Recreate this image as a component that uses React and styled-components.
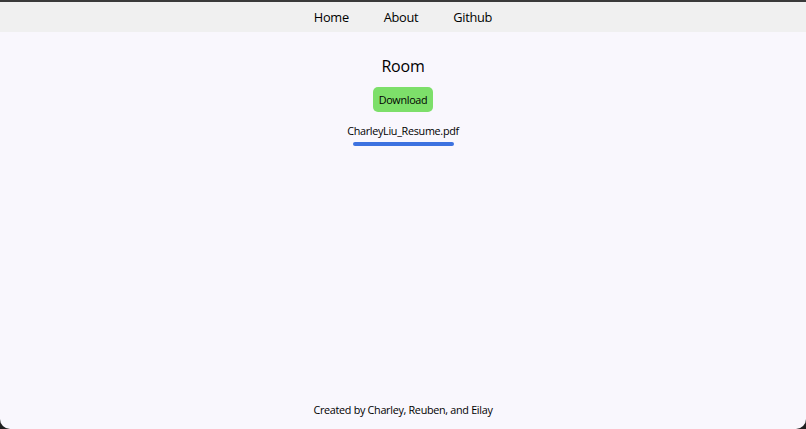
import React from "react";
import styled, { createGlobalStyle } from "styled-components";

const GlobalStyle = createGlobalStyle`
  html, body {
    margin: 0;
    padding: 0;
    background: #1f1f1f;
  }
  body {
    font-family: "Open Sans", "Noto Sans", sans-serif;
  }
`;

const Frame = styled.div`
  width: 806px;
  height: 429px;
  box-sizing: border-box;
  border-top: 2px solid #3a3a3a;
  background: #f9f7fd;
  border-radius: 0 0 10px 10px;
  overflow: hidden;
  display: flex;
  flex-direction: column;
`;

const Nav = styled.nav`
  height: 30px;
  background: #f0f0f0;
  display: flex;
  justify-content: center;
  align-items: center;
  gap: 35px;
`;

const NavLink = styled.a`
  font-size: 12.8px;
  letter-spacing: -0.3px;
  color: #000;
  text-decoration: none;
  cursor: pointer;
`;

const Main = styled.main`
  flex: 1;
  display: flex;
  flex-direction: column;
  align-items: center;
  padding-top: 22px;
`;

const Title = styled.h1`
  margin: 0;
  font-size: 16px;
  letter-spacing: -0.2px;
  font-weight: 500;
  color: #000;
  line-height: 24px;
`;

const DownloadButton = styled.button`
  margin-top: 9px;
  height: 25px;
  padding: 0 6px;
  border: none;
  border-radius: 5px;
  background: #7ddf6a;
  font-family: inherit;
  font-size: 10.8px;
  letter-spacing: -0.3px;
  color: #000;
  cursor: pointer;
`;

const FileName = styled.div`
  margin-top: 11px;
  font-size: 10.8px;
  letter-spacing: -0.3px;
  color: #000;
  line-height: 16px;
`;

const Progress = styled.div`
  margin-top: 3px;
  width: 101px;
  height: 4px;
  border-radius: 2px;
  background: #3d72e0;
`;

const Footer = styled.footer`
  height: 27px;
  display: flex;
  justify-content: center;
  font-size: 10.8px;
  letter-spacing: -0.3px;
  color: #000;
  line-height: 16px;
`;

export default function App() {
  return (
    <>
      <GlobalStyle />
      <Frame>
        <Nav>
          <NavLink>Home</NavLink>
          <NavLink>About</NavLink>
          <NavLink>Github</NavLink>
        </Nav>
        <Main>
          <Title>Room</Title>
          <DownloadButton>Download</DownloadButton>
          <FileName>CharleyLiu_Resume.pdf</FileName>
          <Progress />
        </Main>
        <Footer>Created by Charley, Reuben, and Eilay</Footer>
      </Frame>
    </>
  );
}
